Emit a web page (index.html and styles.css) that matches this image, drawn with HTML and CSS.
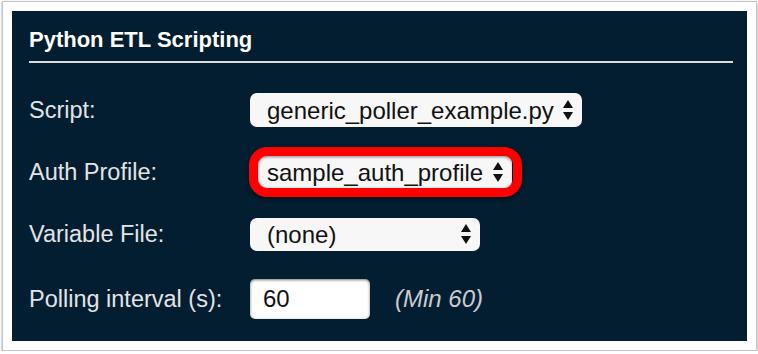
FILE: index.html
```html
<!DOCTYPE html>
<html>

<head>
    <meta charset="utf-8" />
    <title>Python ETL Scripting</title>
    <link rel="stylesheet" href="styles.css">
</head>

<body>
    <div class="frame">
        <div class="panel">
            <h2 class="title">Python ETL Scripting</h2>

            <div class="row">
                <label class="label" for="sel-script">Script:</label>
                <span class="picker picker-script">
                    <select id="sel-script">
                        <option>generic_poller_example.py</option>
                    </select>
                    <svg class="arrows" width="10" height="20" viewBox="0 0 10 20">
                        <polygon points="5,0 10,8 0,8" />
                        <polygon points="0,12 10,12 5,20" />
                    </svg>
                </span>
            </div>

            <div class="row">
                <label class="label" for="sel-auth">Auth Profile:</label>
                <span class="picker picker-auth marked">
                    <select id="sel-auth">
                        <option>sample_auth_profile</option>
                    </select>
                    <svg class="arrows" width="10" height="20" viewBox="0 0 10 20">
                        <polygon points="5,0 10,8 0,8" />
                        <polygon points="0,12 10,12 5,20" />
                    </svg>
                </span>
            </div>

            <div class="row">
                <label class="label" for="sel-vars">Variable File:</label>
                <span class="picker picker-vars">
                    <select id="sel-vars">
                        <option>(none)</option>
                    </select>
                    <svg class="arrows" width="10" height="20" viewBox="0 0 10 20">
                        <polygon points="5,0 10,8 0,8" />
                        <polygon points="0,12 10,12 5,20" />
                    </svg>
                </span>
            </div>

            <div class="row row-last">
                <label class="label" for="input-poll">Polling interval (s):</label>
                <input id="input-poll" class="number" value="60">
                <span class="hint">(Min 60)</span>
            </div>
        </div>
    </div>
</body>

</html>
```

FILE: styles.css
```css
body {
    margin: 0;
    background-color: #fff;
    font-family: "Liberation Sans", Arial, sans-serif;
}

.frame {
    box-sizing: border-box;
    width: 755px;
    height: 350px;
    margin: 1px 0 0 2px;
    padding: 9px;
    border: 1px solid #c4c4c4;
    box-shadow: 0 1px 2px rgba(0, 0, 0, 0.45);
    background-color: #fff;
}

.panel {
    height: 100%;
    box-sizing: border-box;
    padding: 14px 14px 0 17px;
    background-color: #021e30;
}

.title {
    margin: 0 0 16px 0;
    padding-bottom: 6px;
    font-size: 22px;
    line-height: 30px;
    font-weight: bold;
    color: #fff;
    border-bottom: 2px solid #dcdcdc;
}

.row {
    display: flex;
    align-items: center;
    height: 62px;
}

.row-last {
    height: 68px;
}

.label {
    width: 221px;
    flex: none;
    font-size: 23.5px;
    color: #e2e4e6;
}

.picker {
    position: relative;
    display: inline-flex;
}

.picker select {
    appearance: none;
    -webkit-appearance: none;
    box-sizing: border-box;
    height: 34px;
    margin: 0;
    padding: 0 0 0 17px;
    border: none;
    border-radius: 7px;
    background-color: #f7f7f7;
    font-family: "Liberation Sans", Arial, sans-serif;
    font-size: 24px;
    color: #111;
    outline: none;
}

.picker-script select {
    width: 332px;
}

.picker-auth select {
    width: 262px;
}

.picker-vars select {
    width: 230px;
    height: 33px;
}

.arrows {
    position: absolute;
    right: 9px;
    top: 50%;
    margin-top: -10px;
    fill: #111;
    pointer-events: none;
}

.marked::after {
    content: "";
    position: absolute;
    top: -8px;
    bottom: -8px;
    left: -1px;
    right: -10px;
    border: 9px solid #ff0000;
    border-radius: 18px;
    box-shadow: 0 2px 4px rgba(0, 0, 0, 0.55), inset 0 1px 3px rgba(0, 0, 0, 0.45);
    pointer-events: none;
}

.number {
    box-sizing: border-box;
    width: 120px;
    height: 40px;
    margin: 0;
    padding: 0 0 0 13px;
    border: none;
    border-radius: 5px;
    background-color: #fff;
    box-shadow: inset 0 1px 3px rgba(0, 0, 0, 0.55);
    font-family: "Liberation Sans", Arial, sans-serif;
    font-size: 24px;
    color: #111;
}

.hint {
    margin-left: 25px;
    font-size: 24px;
    font-style: italic;
    color: #c9ccd0;
}
```
